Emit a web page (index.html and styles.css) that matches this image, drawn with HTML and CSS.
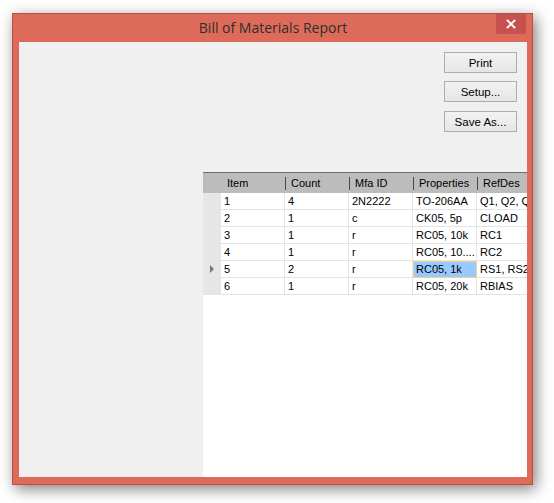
FILE: index.html
```html
<!DOCTYPE html>
<html>
<head>
<meta charset="utf-8">
<link rel="stylesheet" href="styles.css">
</head>
<body>
<div class="page">
  <div class="window">
    <div class="titlebar">
      <span></span>
      <span class="title">Bill of Materials Report</span>
      <span class="close-wrap"><span class="close">
        <svg width="10" height="10" viewBox="0 0 10 10"><path d="M1.5 1.5 L8.5 8.5 M8.5 1.5 L1.5 8.5" stroke="#fff" stroke-width="1.8" stroke-linecap="square"/></svg>
      </span></span>
    </div>
    <div class="client">
      <div class="buttons">
        <button class="btn">Print</button>
        <button class="btn">Setup...</button>
        <button class="btn btn-last">Save As...</button>
      </div>
      <div class="grid">
        <div class="row head">
          <div class="rh"></div>
          <div class="hc">Item</div>
          <div class="hc div">Count</div>
          <div class="hc div">Mfa ID</div>
          <div class="hc div">Properties</div>
          <div class="hc div">RefDes</div>
        </div>
        <div class="row">
          <div class="rh"></div><div class="c">1</div><div class="c">4</div><div class="c">2N2222</div><div class="c">TO-206AA</div><div class="c">Q1, Q2, Q3</div>
        </div>
        <div class="row">
          <div class="rh"></div><div class="c">2</div><div class="c">1</div><div class="c">c</div><div class="c">CK05, 5p</div><div class="c">CLOAD</div>
        </div>
        <div class="row">
          <div class="rh"></div><div class="c">3</div><div class="c">1</div><div class="c">r</div><div class="c">RC05, 10k</div><div class="c">RC1</div>
        </div>
        <div class="row">
          <div class="rh"></div><div class="c">4</div><div class="c">1</div><div class="c">r</div><div class="c">RC05, 10....</div><div class="c">RC2</div>
        </div>
        <div class="row">
          <div class="rh"><span class="arrow"></span></div><div class="c">5</div><div class="c">2</div><div class="c">r</div><div class="c sel">RC05, 1k</div><div class="c">RS1, RS2</div>
        </div>
        <div class="row">
          <div class="rh"></div><div class="c">6</div><div class="c">1</div><div class="c">r</div><div class="c">RC05, 20k</div><div class="c">RBIAS</div>
        </div>
      </div>
    </div>
  </div>
</div>
</body>
</html>
```
FILE: styles.css
```css
html, body {
  margin: 0;
  padding: 0;
  background: #ffffff;
}
.page {
  width: 554px;
  height: 503px;
  padding: 13px 0 0 12px;
  box-sizing: border-box;
  font-family: "Liberation Sans", Arial, sans-serif;
  font-size: 11px;
  color: #000;
}
.window {
  width: 521px;
  height: 472px;
  box-sizing: border-box;
  background: #de6b59;
  border: 1px solid #bd4d40;
  padding: 0 5px 7px 6px;
  display: flex;
  flex-direction: column;
  box-shadow: 3px 4px 14px rgba(0, 0, 0, 0.5);
}
.titlebar {
  height: 28px;
  display: grid;
  grid-template-columns: 1fr auto 1fr;
  align-items: start;
}
.title {
  font-family: "Open Sans", "Noto Sans", sans-serif;
  font-size: 14px;
  color: #2e2e2e;
  line-height: 26px;
  padding-top: 1px;
}
.close-wrap {
  justify-self: end;
}
.close {
  width: 30px;
  height: 20px;
  margin-right: 1px;
  background: #c75050;
  display: flex;
  align-items: center;
  justify-content: center;
}
.client {
  flex: 1;
  background: #f0f0f0;
  display: flex;
  flex-direction: column;
  min-height: 0;
}
.buttons {
  display: flex;
  flex-direction: column;
  align-items: flex-end;
  padding: 10px 10px 0 0;
  gap: 8px;
}
.btn {
  width: 73px;
  height: 21px;
  box-sizing: border-box;
  border: 1px solid #adadad;
  background: linear-gradient(#f2f2f2, #e6e6e6);
  font-family: "Liberation Sans", Arial, sans-serif;
  font-size: 11.5px;
  color: #000;
  padding: 0;
  margin: 0;
}
.btn-last {
  margin-top: 1px;
}
.grid {
  flex: 1;
  margin: 40px 0 0 184px;
  background: #ffffff;
  border-top: 1px solid #6d6d6d;
  overflow: hidden;
}
.row {
  display: grid;
  grid-template-columns: 18px 64px 64px 64px 64px 64px;
  height: 17px;
}
.row.head {
  height: 20px;
  background: #bcbcbc;
}
.rh {
  background: #e6e6e6;
  position: relative;
}
.head .rh {
  background: #bcbcbc;
}
.hc {
  line-height: 20px;
  padding-left: 6px;
  white-space: nowrap;
  position: relative;
}
.hc.div::before {
  content: "";
  position: absolute;
  left: 0;
  top: 4px;
  height: 13px;
  border-left: 1px solid #4a4a4a;
}
.c {
  box-sizing: border-box;
  border-right: 1px solid #e4e4e4;
  border-bottom: 1px solid #e4e4e4;
  line-height: 16px;
  padding-left: 3px;
  white-space: nowrap;
  overflow: hidden;
}
.c.sel {
  background: #99c9ff;
  border: 1px solid #f0d38a;
  padding-left: 2px;
  line-height: 15px;
}
.arrow {
  position: absolute;
  left: 7px;
  top: 4px;
  width: 0;
  height: 0;
  border-top: 4px solid transparent;
  border-bottom: 4px solid transparent;
  border-left: 4px solid #7a7a7a;
}
```
